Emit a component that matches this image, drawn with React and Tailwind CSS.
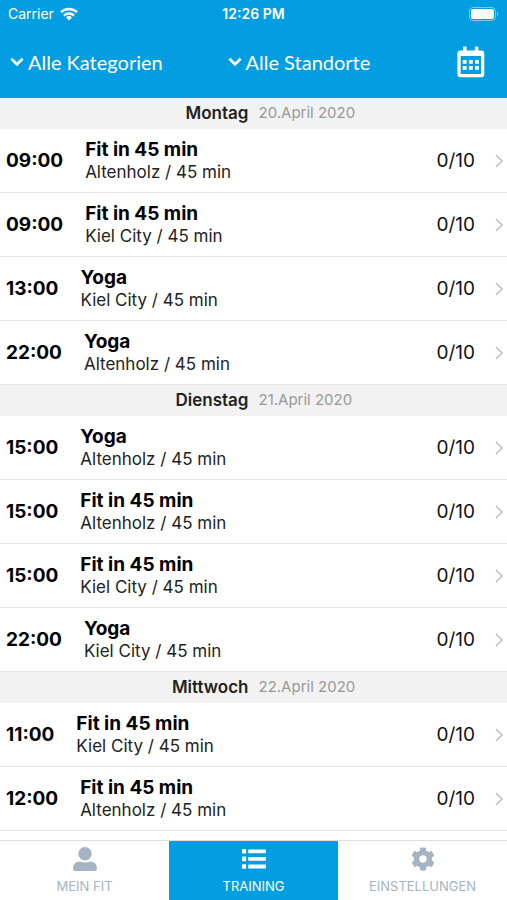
// App.jsx

import React from 'react';
import { FaChevronDown, FaCog } from 'react-icons/fa';

const days = [
  {
    name: 'Montag',
    date: '20.April 2020',
    courses: [
      { time: '09:00', title: 'Fit in 45 min', place: 'Altenholz' },
      { time: '09:00', title: 'Fit in 45 min', place: 'Kiel City' },
      { time: '13:00', title: 'Yoga', place: 'Kiel City' },
      { time: '22:00', title: 'Yoga', place: 'Altenholz' },
    ],
  },
  {
    name: 'Dienstag',
    date: '21.April 2020',
    courses: [
      { time: '15:00', title: 'Yoga', place: 'Altenholz' },
      { time: '15:00', title: 'Fit in 45 min', place: 'Altenholz' },
      { time: '15:00', title: 'Fit in 45 min', place: 'Kiel City' },
      { time: '22:00', title: 'Yoga', place: 'Kiel City' },
    ],
  },
  {
    name: 'Mittwoch',
    date: '22.April 2020',
    courses: [
      { time: '11:00', title: 'Fit in 45 min', place: 'Kiel City' },
      { time: '12:00', title: 'Fit in 45 min', place: 'Altenholz' },
    ],
  },
];

const CalendarIcon = () => (
  <svg viewBox="0 0 28 32" className="w-7 h-8" fill="currentColor">
    <path
      fillRule="evenodd"
      d="M3.4 4.4H6V1q0-.6.6-.6H9q.6 0 .6.6v3.4h8.2V1q0-.6.6-.6h2.4q.6 0 .6.6v3.4h2.8Q27.300 4.4 27.300 7.500v20.800q0 3-3 3H3.400q-3 0-3-3V7.400q0-3 3-3zM3.700 9.900v17.500q0 .6.6.6h19.100q.6 0 .6-.6V9.900z"
    />
    <path d="M5.700 14h3.900v3.800H5.700zM11.900 14h3.900v3.800h-3.900zM18 14h3.900v3.800H18zM5.700 20h3.900v3.800H5.700zM11.900 20h3.900v3.800h-3.900zM18 20h3.900v3.800H18z" />
  </svg>
);

const UserIcon = () => (
  <svg viewBox="0 0 24 24" className="size-6" fill="currentColor">
    <circle cx="12" cy="6.700" r="6.700" />
    <path d="M6.500 14.600q5.500 1.800 11 0 6.300.5 6.300 6.800v1q0 1.600-1.600 1.600H1.800Q.2 24 .2 22.400v-1q0-6.300 6.300-6.800z" />
  </svg>
);

const ListIcon = () => (
  <svg viewBox="0 0 24 24" className="w-[26px] h-6" fill="currentColor">
    <rect x="0" y="2" width="4.200" height="4.600" rx="0.700" />
    <rect x="0" y="9.600" width="4.200" height="4.600" rx="0.700" />
    <rect x="0" y="17.200" width="4.200" height="4.600" rx="0.700" />
    <rect x="6.200" y="2.400" width="17.800" height="3.800" rx="0.700" />
    <rect x="6.200" y="10" width="17.800" height="3.800" rx="0.700" />
    <rect x="6.200" y="17.600" width="17.800" height="3.800" rx="0.700" />
  </svg>
);

const StatusBar = () => (
  <div className="grid grid-cols-3 items-center h-7 px-2 text-sm text-white">
    <div className="flex items-center gap-1.5">
      <span>Carrier</span>
      <svg viewBox="0 0 18 14" className="w-[18px] h-3.5" fill="none" stroke="currentColor" strokeWidth="2.5">
        <path d="M1 5.2a11.5 11.5 0 0 1 16 0" />
        <path d="M4 8.6a7.2 7.2 0 0 1 10 0" />
        <path d="M9 13.6 6 10.5a4.3 4.3 0 0 1 6 0z" fill="currentColor" stroke="none" />
      </svg>
    </div>
    <span className="text-center font-semibold">12:26 PM</span>
    <svg viewBox="0 0 30 14" className="w-[30px] h-3.5 justify-self-end">
      <rect x="0.5" y="0.5" width="26" height="13" rx="3.5" fill="none" stroke="white" strokeOpacity="0.45" />
      <rect x="2" y="2" width="23" height="10" rx="2.2" fill="white" />
      <path d="M28 4.8c1.6.6 1.6 3.8 0 4.4z" fill="white" fillOpacity="0.5" />
    </svg>
  </div>
);

const FilterBar = () => (
  <div className="flex items-center h-[70px] px-2.5 pb-0.5 text-xl text-white font-[Lato,sans-serif]">
    <button type="button" className="flex flex-1 items-center gap-1">
      <FaChevronDown className="size-3.5" stroke="currentColor" strokeWidth="30" />
      Alle Kategorien
    </button>
    <button type="button" className="flex flex-1 items-center gap-1">
      <FaChevronDown className="size-3.5" stroke="currentColor" strokeWidth="30" />
      Alle Standorte
    </button>
    <button type="button" aria-label="Kalender" className="px-3">
      <CalendarIcon />
    </button>
  </div>
);

const CourseRow = ({ course }) => (
  <li className="h-16 border-b border-[#e6e6e6]">
    <a href="#kurs" className="flex items-center h-full pl-1.5 pr-1">
      <span className="text-[19px] leading-[30px] font-bold">{course.time}</span>
      <span className="flex flex-col flex-1 pl-[22px]">
        <span className="text-[19px] leading-[22px] font-bold">{course.title}</span>
        <span className="text-[17px] leading-[22px] text-[#222]">{course.place} / 45 min</span>
      </span>
      <span className="text-[19px] leading-[30px] text-[#111]">0/10</span>
      <svg viewBox="0 0 8 14" className="w-2 h-3.5 ml-5" fill="none" stroke="#c4c4c8" strokeWidth="1.7">
        <path d="M1 1l6 6-6 6" />
      </svg>
    </a>
  </li>
);

const DaySection = ({ day }) => (
  <section>
    <h2 className="grid grid-cols-2 items-center gap-2.5 h-[31px] bg-[#f2f2f2]">
      <span className="text-right text-[17px] font-semibold text-[#222]">{day.name}</span>
      <span className="text-[15px] text-[#999]">{day.date}</span>
    </h2>
    <ul>
      {day.courses.map((course, index) => (
        <CourseRow key={index} course={course} />
      ))}
    </ul>
  </section>
);

const TabBar = () => (
  <nav className="grid grid-cols-3 h-[60px] shrink-0 border-t border-[#ddd] bg-white text-[13px] text-[#a5b4c2]">
    <a href="#mein-fit" className="flex flex-col items-center gap-1.5 pt-1.5">
      <UserIcon />
      MEIN FIT
    </a>
    <a href="#training" className="flex flex-col items-center gap-1.5 pt-1.5 bg-[#039de2] text-white">
      <ListIcon />
      TRAINING
    </a>
    <a href="#einstellungen" className="flex flex-col items-center gap-1.5 pt-1.5">
      <FaCog className="size-6" />
      EINSTELLUNGEN
    </a>
  </nav>
);

const App = () => {
  return (
    <div className="flex flex-col h-screen bg-white text-black font-[Inter,sans-serif]">
      <header className="shrink-0 bg-[#039de2]">
        <StatusBar />
        <FilterBar />
      </header>
      <main className="flex-1 min-h-0 overflow-y-auto">
        {days.map((day) => (
          <DaySection key={day.name} day={day} />
        ))}
      </main>
      <TabBar />
    </div>
  );
};

export default App;
